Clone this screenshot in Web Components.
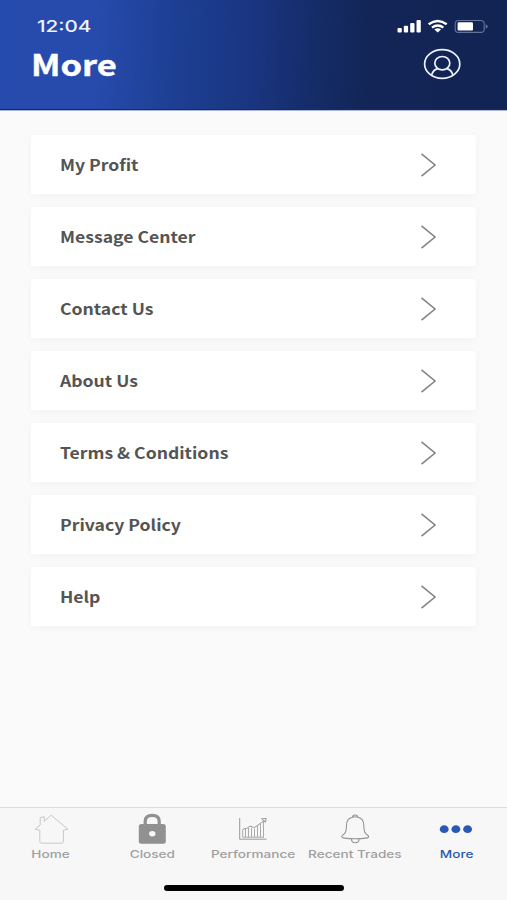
<!DOCTYPE html>
<html lang="en">
<head>
<meta charset="utf-8">
<title>More</title>
<style>
    body {
        margin: 0;
        font-family: "Noto Sans CJK SC", "Noto Sans", sans-serif;
    }
</style>
</head>
<body>
<more-screen></more-screen>
<script>
class StatusBar extends HTMLElement {
    constructor() {
        super();
        this.shadowDom = this.attachShadow({ mode: 'open' });
        this.shadowDom.innerHTML = `
            <style>
                :host {
                    display: flex;
                    justify-content: space-between;
                    align-items: center;
                    height: 20px;
                    padding: 0 19px 0 37px;
                    color: #eef2ff;
                }
                .time {
                    font: 500 16.5px/20px Inter, sans-serif;
                    transform: scaleX(1.25);
                    transform-origin: left;
                }
                svg {
                    display: block;
                }
            </style>
            <span class="time"><slot></slot></span>
            <svg width="91" height="16" viewBox="397 18 91 16" fill="#fff">
                <rect x="397.5" y="28" width="4.3" height="4.5" rx="1"/>
                <rect x="403.8" y="25.8" width="4.3" height="6.7" rx="1"/>
                <rect x="410.2" y="23" width="4.3" height="9.5" rx="1"/>
                <rect x="416.5" y="20" width="4.3" height="12.5" rx="1"/>
                <g fill="none" stroke="#fff" stroke-width="2.4">
                    <path d="M428.7 24.3Q437.7 17.7 446.7 24.3"/>
                    <path d="M432 27.6Q437.7 23.3 443.4 27.6"/>
                </g>
                <path d="M434.4 29.5Q437.7 27.1 441 29.5L437.7 32.5Z"/>
                <rect x="455.2" y="20.5" width="29" height="11.9" rx="3.4" fill="none" stroke="#66739b" stroke-width="1.1"/>
                <rect x="457.6" y="22.3" width="15.4" height="8.2" rx="1.3"/>
                <path d="M485.7 24.3Q487.7 25 487.7 26.5T485.7 28.7Z" fill="#66739b"/>
            </svg>
        `
    }
}

window.customElements.define('status-bar', StatusBar);

class ScreenHeader extends HTMLElement {
    constructor() {
        super();
        this.shadowDom = this.attachShadow({ mode: 'open' });
        this.shadowDom.innerHTML = `
            <style>
                :host {
                    display: block;
                    box-sizing: border-box;
                    height: 110px;
                    padding-top: 16px;
                    background: linear-gradient(92deg, #264bae 0%, #264bac 19%, #1d3f94 34%, #1a3580 50%, #152c68 62%, #122556 73%, #122453 100%);
                    border-bottom: 1px solid #142a6a;
                    box-shadow: 0 1px 0 #a9b5d6;
                }
                .row {
                    display: flex;
                    justify-content: space-between;
                    align-items: center;
                    height: 56px;
                    padding: 0 46px 0 31px;
                }
                .title {
                    color: #fff;
                    font-size: 29px;
                    font-weight: 700;
                    line-height: 54px;
                    padding-bottom: 2px;
                    -webkit-text-stroke: 0.4px #fff;
                    transform: scaleX(1.19);
                    transform-origin: left;
                }
                svg {
                    display: block;
                }
            </style>
            <status-bar>12:04</status-bar>
            <div class="row">
                <span class="title"><slot></slot></span>
                <svg width="38" height="32" viewBox="423 48 38 32" fill="none" stroke="#eef2ff" stroke-width="1.7">
                    <ellipse cx="442.2" cy="64" rx="17.6" ry="14.4"/>
                    <ellipse cx="442.3" cy="63.2" rx="7.5" ry="6.7"/>
                    <path d="M431.5 75.3C432.5 71.6 434.5 69.2 438 68.6M446.6 68.6C450 69.2 452 71.6 453 75.3"/>
                </svg>
            </div>
        `
    }
}

window.customElements.define('screen-header', ScreenHeader);

class MenuRow extends HTMLElement {
    constructor() {
        super();
        this.shadowDom = this.attachShadow({ mode: 'open' });
        this.shadowDom.innerHTML = `
            <style>
                :host {
                    display: flex;
                    justify-content: space-between;
                    align-items: center;
                    box-sizing: border-box;
                    height: 59px;
                    padding: 0 40px 0 29px;
                    background: #fff;
                    border-radius: 2px;
                    box-shadow: 0 2px 8px rgba(0, 0, 0, 0.035);
                    color: #545454;
                }
                .label {
                    font-size: 15.5px;
                    font-weight: 700;
                    line-height: 24px;
                    padding-bottom: 1px;
                    white-space: nowrap;
                    transform: scaleX(1.135);
                    transform-origin: left;
                }
                svg {
                    display: block;
                }
            </style>
            <span class="label"><slot></slot></span>
            <svg width="16" height="24" viewBox="0 0 16 24" fill="none" stroke="#858585" stroke-width="1.6">
                <path d="M1.5 0.8L15 12L1.5 23.2"/>
            </svg>
        `
    }
}

window.customElements.define('menu-row', MenuRow);

class TabItem extends HTMLElement {
    constructor() {
        super();
        this.shadowDom = this.attachShadow({ mode: 'open' });
        this.shadowDom.innerHTML = `
            <style>
                :host {
                    display: flex;
                    flex-direction: column;
                    align-items: center;
                    color: #a0a0a0;
                }
                :host([active]) {
                    color: #2859b4;
                }
                .label {
                    font: 500 11px/14px Inter, sans-serif;
                    white-space: nowrap;
                    transform: scaleX(1.235);
                }
                ::slotted(svg) {
                    display: block;
                    width: 40px;
                    height: 34px;
                    margin-bottom: 1px;
                }
            </style>
            <slot name="icon"></slot>
            <span class="label"><slot></slot></span>
        `
    }
}

window.customElements.define('tab-item', TabItem);

class TabBar extends HTMLElement {
    constructor() {
        super();
        this.shadowDom = this.attachShadow({ mode: 'open' });
        this.shadowDom.innerHTML = `
            <style>
                :host {
                    display: flex;
                    flex-direction: column;
                    justify-content: space-between;
                    align-items: center;
                    box-sizing: border-box;
                    height: 93px;
                    padding: 4px 0 9px;
                    background: #f7f7f7;
                    border-top: 1px solid #dcdcdc;
                }
                .tabs {
                    display: grid;
                    grid-template-columns: repeat(5, 1fr);
                    width: 100%;
                }
                .indicator {
                    width: 180px;
                    height: 6px;
                    border-radius: 3px;
                    background: #000;
                    margin-left: 1px;
                }
            </style>
            <div class="tabs"><slot></slot></div>
            <div class="indicator"></div>
        `
    }
}

window.customElements.define('tab-bar', TabBar);

class MoreScreen extends HTMLElement {
    constructor() {
        super();
        this.shadowDom = this.attachShadow({ mode: 'open' });
        this.shadowDom.innerHTML = `
            <style>
                :host {
                    display: flex;
                    flex-direction: column;
                    height: 100vh;
                    background: #fafafa;
                }
                .menu {
                    flex: 1;
                    display: flex;
                    flex-direction: column;
                    gap: 13px;
                    padding: 25px 31px 0;
                }
            </style>
            <screen-header>More</screen-header>
            <div class="menu">
                <menu-row>My Profit</menu-row>
                <menu-row>Message Center</menu-row>
                <menu-row>Contact Us</menu-row>
                <menu-row>About Us</menu-row>
                <menu-row>Terms &amp; Conditions</menu-row>
                <menu-row>Privacy Policy</menu-row>
                <menu-row>Help</menu-row>
            </div>
            <tab-bar>
                <tab-item>
                    <svg slot="icon" viewBox="0 0 40 34" fill="none" stroke="#c8c8c8" stroke-width="1" stroke-linejoin="round">
                        <path d="M4.2 17.3L9.2 13V5.5L13.3 4.8V9.3L20.2 3.2L37 17.3L32.4 18.2V29.5Q32.4 31.2 30.4 31.2H11Q8.8 31.2 8.8 29.5V18.2Z"/>
                    </svg>
                    Home
                </tab-item>
                <tab-item>
                    <svg slot="icon" viewBox="0 0 40 34">
                        <path d="M13.2 14V9.2Q13.2 3.3 20.2 3.3T27.2 9.2V14" fill="none" stroke="#919191" stroke-width="3.2"/>
                        <rect x="6.8" y="12" width="27" height="19.8" rx="2.5" fill="#919191"/>
                        <ellipse cx="20.3" cy="21.7" rx="3.2" ry="2.7" fill="#f7f7f7"/>
                    </svg>
                    Closed
                </tab-item>
                <tab-item>
                    <svg slot="icon" viewBox="0 0 40 34" fill="none" stroke="#aaa" stroke-width="1">
                        <path d="M6.7 6V27.2H33.5" stroke="#999"/>
                        <path d="M9.7 25.2V18.5M12.5 25.2V17M15.5 25.2V16M18.5 25.2V16M21.5 25.2V16.5M24.5 25.2V14M27.5 25.2V12M30.500 25.2V9.500M9.500 25.200H31"/>
                        <path d="M9 18.500Q11 16 13.500 16.500L17 14.200L21.500 15.500L31.500 8.500M28.500 6.800L33.200 6.500L32.500 10.300Z" stroke="#999"/>
                    </svg>
                    Performance
                </tab-item>
                <tab-item>
                    <svg slot="icon" viewBox="0 0 40 34" fill="none" stroke="#949494" stroke-width="1.1" stroke-linejoin="round">
                        <path d="M17.5 5.2C13.5 6 11.5 9 11.5 13.5C11.5 19.5 10.5 21.5 7.3 23.5Q6 25 8 25.9Q20 27.6 32.5 25.9Q34.5 25 33 23.5C29.8 21.5 28.8 19.5 28.8 13.5C28.8 9 26.8 6 22.8 5.2"/>
                        <path d="M17.5 5.2Q17.5 3 20.2 3T22.8 5.2Q20.2 4.4 17.5 5.2Z"/>
                        <path d="M16.5 27Q16.5 30.8 20.3 30.8T24 27"/>
                    </svg>
                    Recent Trades
                </tab-item>
                <tab-item active>
                    <svg slot="icon" viewBox="0 0 40 34" fill="#2859b4">
                        <ellipse cx="8.2" cy="17.2" rx="4.4" ry="3.9"/>
                        <ellipse cx="19.9" cy="17.2" rx="4.4" ry="3.9"/>
                        <ellipse cx="31.6" cy="17.2" rx="4.4" ry="3.9"/>
                    </svg>
                    More
                </tab-item>
            </tab-bar>
        `
    }
}

window.customElements.define('more-screen', MoreScreen);
</script>
</body>
</html>
